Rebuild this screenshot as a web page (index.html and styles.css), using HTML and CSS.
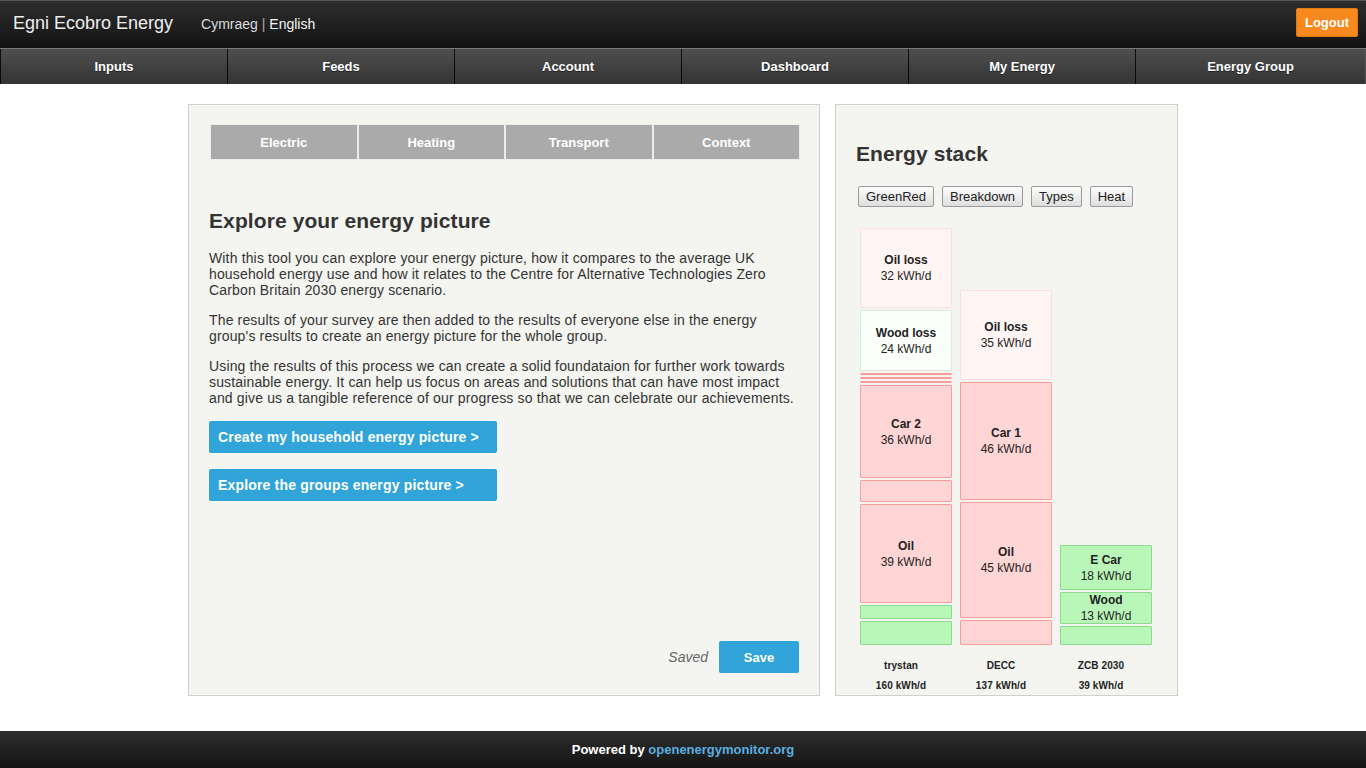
FILE: index.html
```html
<!DOCTYPE html>
<html>
<head>
<meta charset="utf-8">
<title>Egni Ecobro Energy</title>
<link rel="stylesheet" href="styles.css">
</head>
<body>
<header class="topbar">
  <div class="brand">Egni Ecobro Energy</div>
  <div class="lang"><span class="lang-cy">Cymraeg</span> <span class="lang-sep">|</span> <span class="lang-en">English</span></div>
  <button class="logout">Logout</button>
</header>
<nav class="mainnav">
  <a class="nav-item">Inputs</a>
  <a class="nav-item">Feeds</a>
  <a class="nav-item">Account</a>
  <a class="nav-item">Dashboard</a>
  <a class="nav-item">My Energy</a>
  <a class="nav-item">Energy Group</a>
</nav>
<main class="content">
  <section class="panel panel-left">
    <div class="tabs">
      <div class="tab">Electric</div>
      <div class="tab">Heating</div>
      <div class="tab">Transport</div>
      <div class="tab">Context</div>
    </div>
    <h2 class="title">Explore your energy picture</h2>
    <p class="para">With this tool you can explore your energy picture, how it compares to the average UK household energy use and how it relates to the Centre for Alternative Technologies Zero Carbon Britain 2030 energy scenario.</p>
    <p class="para">The results of your survey are then added to the results of everyone else in the energy group's results to create an energy picture for the whole group.</p>
    <p class="para">Using the results of this process we can create a solid foundataion for further work towards sustainable energy. It can help us focus on areas and solutions that can have most impact and give us a tangible reference of our progress so that we can celebrate our achievements.</p>
    <button class="bigbtn">Create my household energy picture &gt;</button>
    <button class="bigbtn">Explore the groups energy picture &gt;</button>
    <div class="saverow">
      <span class="saved">Saved</span>
      <button class="savebtn">Save</button>
    </div>
  </section>
  <section class="panel panel-right">
    <h2 class="title stack-title">Energy stack</h2>
    <div class="modes">
      <button class="mode">GreenRed</button>
      <button class="mode">Breakdown</button>
      <button class="mode">Types</button>
      <button class="mode">Heat</button>
    </div>
    <div class="chart">
      <div class="col">
        <div class="bars">
          <div class="blk loss-red" style="height:80px"><b>Oil loss</b><span>32 kWh/d</span></div>
          <div class="blk loss-green" style="height:61px"><b>Wood loss</b><span>24 kWh/d</span></div>
          <div class="blk red thin" style="height:2px"></div>
          <div class="blk red thin" style="height:2px"></div>
          <div class="blk red thin" style="height:2px"></div>
          <div class="blk red" style="height:93px"><b>Car 2</b><span>36 kWh/d</span></div>
          <div class="blk red" style="height:22px"></div>
          <div class="blk red" style="height:99px"><b>Oil</b><span>39 kWh/d</span></div>
          <div class="blk green" style="height:14px"></div>
          <div class="blk green" style="height:24px"></div>
        </div>
        <div class="lbl">trystan</div>
        <div class="lbl">160 kWh/d</div>
      </div>
      <div class="col">
        <div class="bars">
          <div class="blk loss-red" style="height:90px"><b>Oil loss</b><span>35 kWh/d</span></div>
          <div class="blk red" style="height:118px"><b>Car 1</b><span>46 kWh/d</span></div>
          <div class="blk red" style="height:116px"><b>Oil</b><span>45 kWh/d</span></div>
          <div class="blk red" style="height:25px"></div>
        </div>
        <div class="lbl">DECC</div>
        <div class="lbl">137 kWh/d</div>
      </div>
      <div class="col">
        <div class="bars">
          <div class="blk green" style="height:45px"><b>E Car</b><span>18 kWh/d</span></div>
          <div class="blk green" style="height:32px"><b>Wood</b><span>13 kWh/d</span></div>
          <div class="blk green" style="height:19px"></div>
        </div>
        <div class="lbl">ZCB 2030</div>
        <div class="lbl">39 kWh/d</div>
      </div>
    </div>
  </section>
</main>
<footer class="footer">
  <span>Powered by <a class="footlink">openenergymonitor.org</a></span>
</footer>
</body>
</html>
```

FILE: styles.css
```css
* { box-sizing: border-box; }
html, body { margin: 0; padding: 0; }
body {
  font-family: "Liberation Sans", Arial, sans-serif;
  font-size: 14px;
  color: #333;
  background: #fff;
  width: 1366px;
  height: 768px;
  display: flex;
  flex-direction: column;
}
button { font-family: inherit; cursor: pointer; }

.topbar {
  height: 48px;
  display: flex;
  align-items: center;
  padding: 0 8px 2px 13px;
  background: linear-gradient(#2e2e2e, #131313);
  border-top: 1px solid #555;
}
.brand { font-size: 18px; color: #eee; }
.lang { margin-left: 28px; font-size: 14px; color: #ddd; }
.lang-cy { color: #dcdcdc; }
.lang-en { color: #f4f4f4; }
.lang-sep { color: #aaa; }
.logout {
  margin-left: auto;
  align-self: flex-start;
  margin-top: 7px;
  width: 62px;
  height: 29px;
  background: #f7891f;
  border: 1px solid #e27a12;
  border-radius: 2px;
  color: #fff;
  font-weight: bold;
  font-size: 13px;
  padding: 0;
}

.mainnav {
  height: 36px;
  display: flex;
  background: linear-gradient(#4e4e4e, #343434);
  border-top: 1px solid #7a7a7a;
}
.nav-item {
  flex: 0 0 227px;
  display: flex;
  align-items: center;
  justify-content: center;
  color: #fff;
  font-weight: bold;
  font-size: 13px;
  border-right: 1px solid #0a0a0a;
  text-shadow: 0 1px 0 #222;
}
.nav-item:first-child { flex-basis: 228px; border-left: 1px solid #0a0a0a; }
.nav-item:last-child { flex: 1 1 auto; border-right: 1px solid #555; }

.content {
  flex: 1;
  display: flex;
  align-items: stretch;
  gap: 15px;
  width: 990px;
  margin: 20px auto 35px;
}
.panel {
  background: #f4f4f0;
  border: 1px solid #cfcfcf;
}
.panel-left {
  width: 632px;
  padding: 19px 20px 22px 20px;
  display: flex;
  flex-direction: column;
}
.panel-right {
  flex: 1;
  padding: 20px 0 0 20px;
}

.tabs { display: flex; height: 36px; margin: 0 -1px 0 1px; }
.tab {
  flex: 1;
  background: #aaa;
  border: 1px solid #ececec;
  color: #fff;
  font-weight: bold;
  font-size: 13px;
  display: flex;
  align-items: center;
  justify-content: center;
}

.title {
  font-size: 21px;
  line-height: 24px;
  font-weight: bold;
  color: #333;
  margin: 49px 0 17px;
  letter-spacing: 0.1px;
}
.para {
  margin: 0 0 14px;
  line-height: 16px;
  font-size: 14px;
  color: #333;
  letter-spacing: 0.15px;
}
.bigbtn {
  display: block;
  width: 288px;
  height: 32px;
  margin: 0 0 16px;
  padding: 0 9px;
  text-align: left;
  background: #31a4d9;
  border: 0;
  border-radius: 2px;
  color: #fff;
  font-weight: bold;
  font-size: 14px;
  letter-spacing: 0.17px;
}
.bigbtn:first-of-type { margin-top: 1px; }
.saverow {
  margin-top: auto;
  display: flex;
  align-items: center;
  justify-content: flex-end;
  gap: 11px;
}
.saved { font-style: italic; color: #666; font-size: 14px; }
.savebtn {
  width: 80px;
  height: 32px;
  background: #31a4d9;
  border: 0;
  border-radius: 2px;
  color: #fff;
  font-weight: bold;
  font-size: 13px;
}

.stack-title { margin: 17px 0 20px; }
.modes { display: flex; gap: 8px; padding-left: 2px; }
.mode {
  height: 21px;
  padding: 0 7px;
  font-size: 13px;
  color: #222;
  background: linear-gradient(#fdfdfd, #dedede);
  border: 1px solid #9a9a9a;
  border-radius: 2px;
}

.chart {
  display: flex;
  gap: 8px;
  margin-left: 4px;
}
.col { width: 92px; display: flex; flex-direction: column; }
.bars {
  height: 438px;
  display: flex;
  flex-direction: column;
  justify-content: flex-end;
  gap: 2px;
}
.blk {
  border: 1px solid;
  border-radius: 1px;
  display: flex;
  flex-direction: column;
  align-items: center;
  justify-content: center;
  font-size: 12px;
  line-height: 16px;
  color: #222;
  flex-shrink: 0;
}
.blk b { font-weight: bold; }
.loss-red { background: #fff5f5; border-color: #fcdcdc; }
.loss-green { background: #fafffa; border-color: #d8edd8; }
.red { background: #ffd5d5; border-color: #f99c9c; }
.green { background: #b9f7b9; border-color: #8ed98e; }
.lbl {
  width: 82px;
  text-align: center;
  font-size: 10px;
  font-weight: bold;
  line-height: 20px;
  color: #222;
  letter-spacing: 0.1px;
}
.bars + .lbl { margin-top: 11px; }
.lbl:last-child { line-height: 19px; }

.footer {
  height: 37px;
  display: flex;
  align-items: center;
  justify-content: center;
  background: linear-gradient(#2e2e2e, #141414);
  color: #fff;
  font-weight: bold;
  font-size: 13px;
}
.footlink { color: #5aaee0; }
```
